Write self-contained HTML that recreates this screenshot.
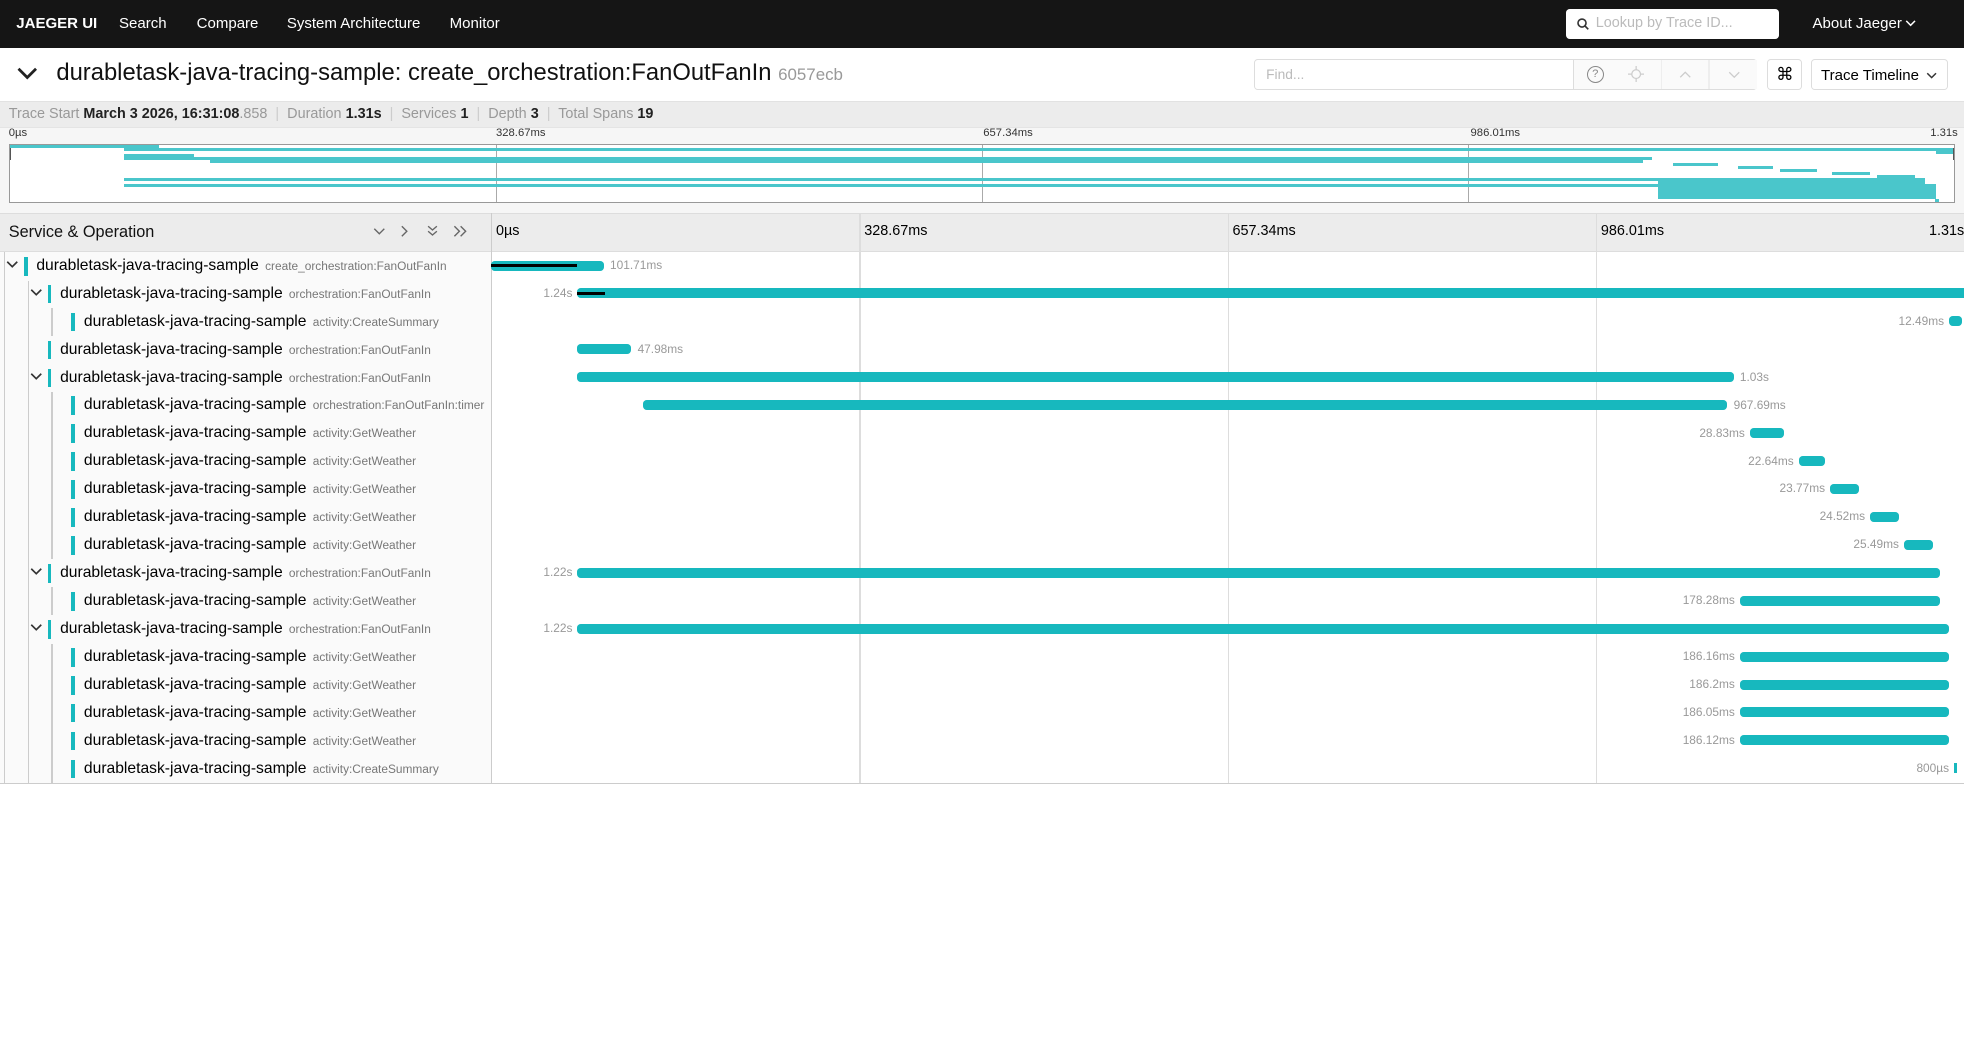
<!DOCTYPE html>
<html><head><meta charset="utf-8">
<style>
html,body{margin:0;padding:0;background:#fff;}
body{zoom:1.2526;width:1568px;height:843px;position:relative;overflow:hidden;font-family:"Liberation Sans",sans-serif;color:#000;}
.a{position:absolute;}
.nav{left:0;top:0;width:1568px;height:38px;background:#151515;}
.nav span{position:absolute;top:12px;color:#fff;font-size:12px;}
.bar{position:absolute;height:8px;background:#17b8be;border-radius:3px;}
.lbl{position:absolute;font-size:9.5px;color:#999;top:5px;white-space:nowrap;}
.row{position:absolute;left:0;width:1568px;height:22.3px;}
.svc{position:absolute;top:4px;font-size:12.5px;color:#000;white-space:nowrap;}
.svc small{font-size:9.5px;color:#777;margin-left:5px;}
.cb{position:absolute;top:4px;width:3px;height:15px;background:#17b8be;}
.tg{position:absolute;top:5px;width:10px;height:10px;}
.vl{position:absolute;width:1px;background:#ccc;}
.mm{position:absolute;height:2.2px;background:#4ac6cb;}
.tk{position:absolute;top:101px;font-size:9px;color:#333;}
.ht{position:absolute;top:178px;font-size:11.5px;color:#000;}
.grid{position:absolute;top:170px;width:1px;height:455px;background:#ddd;}
</style></head><body>
<div class="a nav">
<span style="left:13px;font-weight:bold;">JAEGER UI</span>
<span style="left:95px">Search</span>
<span style="left:157px">Compare</span>
<span style="left:229px">System Architecture</span>
<span style="left:359px">Monitor</span>
<div class="a" style="left:1250px;top:7px;width:170px;height:24px;background:#fff;border-radius:3px;">
<svg class="a" style="left:9px;top:7px" width="10" height="10" viewBox="0 0 10 10"><circle cx="4" cy="4" r="3.2" fill="none" stroke="#333" stroke-width="1.3"/><path d="M6.5 6.5L9 9" stroke="#333" stroke-width="1.3"/></svg>
<div class="a" style="left:24px;top:5px;font-size:11.5px;color:#bbb;">Lookup by Trace ID...</div></div>
<span style="left:1447px">About Jaeger</span>
<svg class="a" style="left:1521px;top:15px" width="9" height="7" viewBox="0 0 9 7"><path d="M1 1.5L4.5 5L8 1.5" fill="none" stroke="#fff" stroke-width="1.2"/></svg>
</div>
<svg class="a" style="left:13px;top:52px" width="18" height="14" viewBox="0 0 18 14"><path d="M2 3L9 10L16 3" fill="none" stroke="#222" stroke-width="2.2"/></svg>
<div class="a" style="left:45px;top:47px;font-size:19px;color:#111;white-space:nowrap;">durabletask-java-tracing-sample: create_orchestration:FanOutFanIn <span style="font-size:13.5px;color:#999;">6057ecb</span></div>
<div class="a" style="left:1001px;top:47px;width:402px;height:25px;border:1px solid #ddd;border-radius:3px;box-sizing:border-box;">
<div class="a" style="left:9px;top:6px;font-size:11px;color:#bbb;">Find...</div>
<div class="a" style="left:254px;top:0;width:1px;height:23px;background:#ddd;"></div>
<div class="a" style="left:255px;top:0;width:146px;height:23px;background:#fafafa;"></div>
<div class="a" style="left:265px;top:5px;width:12px;height:12px;border:1px solid #888;border-radius:50%;font-size:9px;color:#888;text-align:center;line-height:12px;">?</div>
<svg class="a" style="left:298px;top:5px" width="13" height="13" viewBox="0 0 13 13"><circle cx="6.5" cy="6.5" r="3.5" fill="none" stroke="#ccc"/><path d="M6.5 0V3M6.5 10V13M0 6.5H3M10 6.5H13" stroke="#ccc"/></svg>
<div class="a" style="left:324px;top:0;width:1px;height:23px;background:#eee;"></div>
<svg class="a" style="left:339px;top:9px" width="10" height="6" viewBox="0 0 10 6"><path d="M1 5L5 1L9 5" fill="none" stroke="#ccc"/></svg>
<div class="a" style="left:362px;top:0;width:1px;height:23px;background:#eee;"></div>
<svg class="a" style="left:378px;top:9px" width="10" height="6" viewBox="0 0 10 6"><path d="M1 1L5 5L9 1" fill="none" stroke="#ccc"/></svg>
</div>
<div class="a" style="left:1411px;top:47px;width:28px;height:25px;border:1px solid #ddd;border-radius:3px;box-sizing:border-box;text-align:center;font-size:14px;line-height:23px;">⌘</div>
<div class="a" style="left:1446px;top:47px;width:109px;height:25px;border:1px solid #ddd;border-radius:3px;box-sizing:border-box;">
<div class="a" style="left:7px;top:6px;font-size:12px;">Trace Timeline</div>
<svg class="a" style="left:91px;top:10px" width="9" height="6" viewBox="0 0 9 6"><path d="M1 1L4.5 4.5L8 1" fill="none" stroke="#333" stroke-width="1.2"/></svg>
</div>
<div class="a" style="left:0;top:81px;width:1568px;height:20px;background:#ececec;border-top:1px solid #e2e2e2;box-sizing:border-box;"></div>
<div class="a" style="left:7px;top:85px;font-size:11.5px;color:#999;white-space:nowrap;">Trace Start <b style="color:#222">March 3 2026, 16:31:08</b>.858 <span style="color:#ccc">&nbsp;|&nbsp;</span> Duration <b style="color:#222">1.31s</b> <span style="color:#ccc">&nbsp;|&nbsp;</span> Services <b style="color:#222">1</b> <span style="color:#ccc">&nbsp;|&nbsp;</span> Depth <b style="color:#222">3</b> <span style="color:#ccc">&nbsp;|&nbsp;</span> Total Spans <b style="color:#222">19</b></div>
<div class="a" style="left:0;top:101px;width:1568px;height:69px;background:#f6f6f6;border-top:1px solid #e4e4e4;box-sizing:border-box;"></div>
<div class="tk" style="left:7px">0µs</div>
<div class="tk" style="left:396px">328.67ms</div>
<div class="tk" style="left:785px">657.34ms</div>
<div class="tk" style="left:1174px">986.01ms</div>
<div class="tk" style="left:1541px">1.31s</div>
<div class="a" style="left:7px;top:115px;width:1554px;height:47px;background:#fff;border:1px solid #999;box-sizing:border-box;overflow:hidden;">
<div class="a" style="left:388px;top:0;width:1px;height:47px;background:#aaa"></div>
<div class="a" style="left:776px;top:0;width:1px;height:47px;background:#aaa"></div>
<div class="a" style="left:1164px;top:0;width:1px;height:47px;background:#aaa"></div>
<div class="mm" style="left:0;width:119px;top:0"></div>
<div class="mm" style="left:91px;width:1463px;top:2.4px"></div>
<div class="mm" style="left:1538px;width:13px;top:4.8px"></div>
<div class="mm" style="left:91px;width:56px;top:7.2px"></div>
<div class="mm" style="left:91px;width:1220px;top:9.6px"></div>
<div class="mm" style="left:160px;width:1144px;top:12px"></div>
<div class="mm" style="left:1328px;width:36px;top:14.4px"></div>
<div class="mm" style="left:1380px;width:28px;top:16.8px"></div>
<div class="mm" style="left:1413px;width:30px;top:19.2px"></div>
<div class="mm" style="left:1455px;width:30px;top:21.6px"></div>
<div class="mm" style="left:1491px;width:30px;top:24px"></div>
<div class="mm" style="left:91px;width:1438px;top:26.4px"></div>
<div class="mm" style="left:1316px;width:213px;top:28.8px"></div>
<div class="mm" style="left:91px;width:1447px;top:31.2px"></div>
<div class="mm" style="left:1316px;width:222px;top:33.6px"></div>
<div class="mm" style="left:1316px;width:222px;top:36px"></div>
<div class="mm" style="left:1316px;width:222px;top:38.4px"></div>
<div class="mm" style="left:1316px;width:222px;top:40.8px"></div>
<div class="mm" style="left:1537px;width:3px;top:43.2px"></div>
<div class="a" style="left:0;top:2px;width:1px;height:10px;background:#555"></div>
<div class="a" style="left:1551px;top:2px;width:2px;height:10px;background:#555"></div>
</div>
<div class="a" style="left:0;top:170px;width:1568px;height:31px;background:#ececec;border-top:1px solid #ddd;border-bottom:1px solid #ddd;box-sizing:border-box;"></div>
<div class="a" style="left:7px;top:178px;font-size:13px;color:#111;">Service &amp; Operation</div>
<svg class="a" style="left:298px;top:180px" width="80" height="10" viewBox="0 0 80 10"><path d="M1 3L5 7L9 3" fill="none" stroke="#666" stroke-width="1.1"/><path d="M23 1L27 5L23 9" fill="none" stroke="#666" stroke-width="1.1"/><path d="M44 1L47.5 4L51 1M44 5L47.5 8L51 5" fill="none" stroke="#666" stroke-width="1.1"/><path d="M65 1L69 5L65 9M70 1L74 5L70 9" fill="none" stroke="#666" stroke-width="1.1"/></svg>
<div class="a" style="left:392px;top:170px;width:1px;height:455px;background:#ccc"></div>
<div class="ht" style="left:396px">0µs</div>
<div class="ht" style="left:690px">328.67ms</div>
<div class="ht" style="left:984px">657.34ms</div>
<div class="ht" style="left:1278px">986.01ms</div>
<div class="ht" style="left:1540px">1.31s</div>
<div class="grid" style="left:686px"></div>
<div class="grid" style="left:980px"></div>
<div class="grid" style="left:1274px"></div>
<div class="a" style="left:0;top:201px;width:392px;height:424px;background:#fafafa;"></div>
<div class="a" style="left:0;top:625px;width:1568px;height:1px;background:#ccc;"></div>
<div class="vl" style="left:3px;top:201px;height:424px"></div>
<div class="vl" style="left:22px;top:224px;height:401px"></div>
<div class="vl" style="left:41px;top:246px;height:22px"></div>
<div class="vl" style="left:41px;top:313px;height:133px"></div>
<div class="vl" style="left:41px;top:469px;height:22px"></div>
<div class="vl" style="left:41px;top:514px;height:111px"></div>

<div class="row" style="top:201px">
<svg class="tg" style="left:5px" viewBox="0 0 10 10"><path d="M1 3L5 7L9 3" fill="none" stroke="#333" stroke-width="1.3"/></svg>
<div class="cb" style="left:19px"></div><div class="svc" style="left:29px">durabletask-java-tracing-sample<small>create_orchestration:FanOutFanIn</small></div>
<div class="bar" style="left:392px;width:90px;top:7px"></div><div class="a" style="left:392px;width:69px;top:10px;height:2px;background:#000"></div><div class="lbl" style="left:487px">101.71ms</div></div>

<div class="row" style="top:223.3px">
<svg class="tg" style="left:24px" viewBox="0 0 10 10"><path d="M1 3L5 7L9 3" fill="none" stroke="#333" stroke-width="1.3"/></svg>
<div class="cb" style="left:38px"></div><div class="svc" style="left:48px">durabletask-java-tracing-sample<small>orchestration:FanOutFanIn</small></div>
<div class="lbl" style="right:1111px">1.24s</div><div class="bar" style="left:461px;width:1107px;top:7px;border-radius:3px 0 0 3px"></div><div class="a" style="left:461px;width:22px;top:10px;height:2px;background:#000"></div></div>

<div class="row" style="top:245.6px">
<div class="cb" style="left:57px"></div><div class="svc" style="left:67px">durabletask-java-tracing-sample<small>activity:CreateSummary</small></div>
<div class="lbl" style="right:16px">12.49ms</div><div class="bar" style="left:1556px;width:10px;top:7px"></div></div>

<div class="row" style="top:267.9px">
<div class="cb" style="left:38px"></div><div class="svc" style="left:48px">durabletask-java-tracing-sample<small>orchestration:FanOutFanIn</small></div>
<div class="bar" style="left:461px;width:43px;top:7px"></div><div class="lbl" style="left:509px">47.98ms</div></div>

<div class="row" style="top:290.2px">
<svg class="tg" style="left:24px" viewBox="0 0 10 10"><path d="M1 3L5 7L9 3" fill="none" stroke="#333" stroke-width="1.3"/></svg>
<div class="cb" style="left:38px"></div><div class="svc" style="left:48px">durabletask-java-tracing-sample<small>orchestration:FanOutFanIn</small></div>
<div class="bar" style="left:461px;width:923px;top:7px"></div><div class="lbl" style="left:1389px">1.03s</div></div>

<div class="row" style="top:312.5px">
<div class="cb" style="left:57px"></div><div class="svc" style="left:67px">durabletask-java-tracing-sample<small>orchestration:FanOutFanIn:timer</small></div>
<div class="bar" style="left:513px;width:866px;top:7px"></div><div class="lbl" style="left:1384px">967.69ms</div></div>

<div class="row" style="top:334.8px">
<div class="cb" style="left:57px"></div><div class="svc" style="left:67px">durabletask-java-tracing-sample<small>activity:GetWeather</small></div>
<div class="lbl" style="right:175px">28.83ms</div><div class="bar" style="left:1397px;width:27px;top:7px"></div></div>

<div class="row" style="top:357.1px">
<div class="cb" style="left:57px"></div><div class="svc" style="left:67px">durabletask-java-tracing-sample<small>activity:GetWeather</small></div>
<div class="lbl" style="right:136px">22.64ms</div><div class="bar" style="left:1436px;width:21px;top:7px"></div></div>

<div class="row" style="top:379.4px">
<div class="cb" style="left:57px"></div><div class="svc" style="left:67px">durabletask-java-tracing-sample<small>activity:GetWeather</small></div>
<div class="lbl" style="right:111px">23.77ms</div><div class="bar" style="left:1461px;width:23px;top:7px"></div></div>

<div class="row" style="top:401.7px">
<div class="cb" style="left:57px"></div><div class="svc" style="left:67px">durabletask-java-tracing-sample<small>activity:GetWeather</small></div>
<div class="lbl" style="right:79px">24.52ms</div><div class="bar" style="left:1493px;width:23px;top:7px"></div></div>

<div class="row" style="top:424px">
<div class="cb" style="left:57px"></div><div class="svc" style="left:67px">durabletask-java-tracing-sample<small>activity:GetWeather</small></div>
<div class="lbl" style="right:52px">25.49ms</div><div class="bar" style="left:1520px;width:23px;top:7px"></div></div>

<div class="row" style="top:446.3px">
<svg class="tg" style="left:24px" viewBox="0 0 10 10"><path d="M1 3L5 7L9 3" fill="none" stroke="#333" stroke-width="1.3"/></svg>
<div class="cb" style="left:38px"></div><div class="svc" style="left:48px">durabletask-java-tracing-sample<small>orchestration:FanOutFanIn</small></div>
<div class="lbl" style="right:1111px">1.22s</div><div class="bar" style="left:461px;width:1088px;top:7px"></div></div>

<div class="row" style="top:468.6px">
<div class="cb" style="left:57px"></div><div class="svc" style="left:67px">durabletask-java-tracing-sample<small>activity:GetWeather</small></div>
<div class="lbl" style="right:183px">178.28ms</div><div class="bar" style="left:1389px;width:160px;top:7px"></div></div>

<div class="row" style="top:490.9px">
<svg class="tg" style="left:24px" viewBox="0 0 10 10"><path d="M1 3L5 7L9 3" fill="none" stroke="#333" stroke-width="1.3"/></svg>
<div class="cb" style="left:38px"></div><div class="svc" style="left:48px">durabletask-java-tracing-sample<small>orchestration:FanOutFanIn</small></div>
<div class="lbl" style="right:1111px">1.22s</div><div class="bar" style="left:461px;width:1095px;top:7px"></div></div>

<div class="row" style="top:513.2px">
<div class="cb" style="left:57px"></div><div class="svc" style="left:67px">durabletask-java-tracing-sample<small>activity:GetWeather</small></div>
<div class="lbl" style="right:183px">186.16ms</div><div class="bar" style="left:1389px;width:167px;top:7px"></div></div>

<div class="row" style="top:535.5px">
<div class="cb" style="left:57px"></div><div class="svc" style="left:67px">durabletask-java-tracing-sample<small>activity:GetWeather</small></div>
<div class="lbl" style="right:183px">186.2ms</div><div class="bar" style="left:1389px;width:167px;top:7px"></div></div>

<div class="row" style="top:557.8px">
<div class="cb" style="left:57px"></div><div class="svc" style="left:67px">durabletask-java-tracing-sample<small>activity:GetWeather</small></div>
<div class="lbl" style="right:183px">186.05ms</div><div class="bar" style="left:1389px;width:167px;top:7px"></div></div>

<div class="row" style="top:580.1px">
<div class="cb" style="left:57px"></div><div class="svc" style="left:67px">durabletask-java-tracing-sample<small>activity:GetWeather</small></div>
<div class="lbl" style="right:183px">186.12ms</div><div class="bar" style="left:1389px;width:167px;top:7px"></div></div>

<div class="row" style="top:602.4px">
<div class="cb" style="left:57px"></div><div class="svc" style="left:67px">durabletask-java-tracing-sample<small>activity:CreateSummary</small></div>
<div class="lbl" style="right:12px">800µs</div><div class="bar" style="left:1560px;width:2px;top:7px;border-radius:0"></div></div>

</body></html>
